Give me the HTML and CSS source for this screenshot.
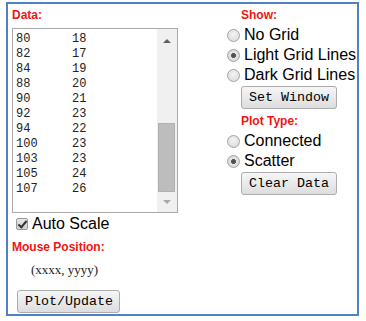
FILE: index.html
```html
<!DOCTYPE html>
<html lang="en">
<head>
  <meta charset="UTF-8" />
  <title>Plot Data</title>
  <link rel="stylesheet" href="styles.css">
</head>
<body>
  <div class="panel">
    <!-- Data entry column -->
    <div class="left-col">
      <div class="caption">Data:</div>
      <div class="data-box">
        <pre class="data-text">80	18
82	17
84	19
88	20
90	21
92	23
94	22
100	23
103	23
105	24
107	26</pre>
        <div class="scrollbar">
          <div class="arrow-up"></div>
          <div class="track"></div>
          <div class="thumb"></div>
          <div class="arrow-down"></div>
        </div>
      </div>
      <label class="check-row">
        <input type="checkbox" checked>
        <span>Auto Scale</span>
      </label>
      <div class="caption mouse-caption">Mouse Position:</div>
      <div class="mouse-pos">(xxxx, yyyy)</div>
      <button class="btn plot-btn">Plot/Update</button>
    </div>

    <!-- Options column -->
    <div class="right-col">
      <div class="caption indent">Show:</div>
      <label class="radio-row"><input type="radio" name="grid"><span>No Grid</span></label>
      <label class="radio-row"><input type="radio" name="grid" checked><span>Light Grid Lines</span></label>
      <label class="radio-row"><input type="radio" name="grid"><span>Dark Grid Lines</span></label>
      <button class="btn indent">Set Window</button>

      <div class="caption indent plot-type">Plot Type:</div>
      <label class="radio-row"><input type="radio" name="ptype"><span>Connected</span></label>
      <label class="radio-row"><input type="radio" name="ptype" checked><span>Scatter</span></label>
      <button class="btn indent">Clear Data</button>
    </div>
  </div>
</body>
</html>
```

FILE: styles.css
```css
body {
  margin: 0;
  padding: 0;
  background: #fff;
  font-family: 'Liberation Sans', Arial, sans-serif;
}

.panel {
  display: flex;
  width: 349px;
  height: 310px;
  margin: 2px 0 0 6px;
  border: 2px solid #4f81c4;
  box-sizing: content-box;
}

/* Left column */
.left-col {
  width: 166px;
  padding: 4px 0 0 4px;
  display: flex;
  flex-direction: column;
  align-items: flex-start;
}

.caption {
  color: #f01414;
  font-weight: 700;
  font-size: 12px;
  line-height: 14px;
}

.data-box {
  display: flex;
  width: 166px;
  height: 185px;
  margin-top: 6px;
  border: 1px solid #a9a9a9;
  box-sizing: border-box;
}

.data-text {
  flex: 1;
  margin: 0;
  padding: 3px 3px;
  font-family: 'Liberation Mono', 'Courier New', monospace;
  font-size: 12px;
  line-height: 15px;
  color: #222;
  tab-size: 56px;
  overflow: hidden;
}

.scrollbar {
  width: 20px;
  background: #f0f0f0;
  display: flex;
  flex-direction: column;
  align-items: center;
}

.arrow-up, .arrow-down {
  width: 0;
  height: 0;
  border-left: 4px solid transparent;
  border-right: 4px solid transparent;
}

.arrow-up {
  margin-top: 10px;
  margin-bottom: 10px;
  border-bottom: 4px solid #606060;
}

.track {
  flex: 1;
}

.thumb {
  width: 17px;
  height: 69px;
  margin-right: 1px;
  background: #bdbdbd;
  box-sizing: border-box;
  border: 1px solid #b0b0b0;
}

.arrow-down {
  margin-top: 8px;
  margin-bottom: 8px;
  border-top: 4px solid #a8a8a8;
}

.check-row {
  display: flex;
  align-items: center;
  height: 18px;
  margin-top: 2px;
  padding-left: 4px;
  font-size: 16px;
}

.check-row input {
  appearance: none;
  width: 12px;
  height: 12px;
  margin: 0 4px 0 0;
  border: 1px solid #9a9a9a;
  border-radius: 2px;
  background: linear-gradient(#e8e8e8, #d0d0d0);
  position: relative;
}

.check-row input:checked::after {
  content: "";
  position: absolute;
  left: 3px;
  top: 0px;
  width: 3px;
  height: 7px;
  border-right: 2px solid #333;
  border-bottom: 2px solid #333;
  transform: rotate(40deg);
}

.mouse-caption {
  margin-top: 7px;
}

.mouse-pos {
  margin: 8px 0 0 19px;
  font-family: 'Liberation Serif', 'Times New Roman', serif;
  font-size: 13px;
  line-height: 16px;
  color: #222;
}

.btn {
  height: 23px;
  padding: 0 7px;
  font-family: 'Liberation Mono', 'Courier New', monospace;
  font-size: 13.33px;
  color: #000;
  background: linear-gradient(#f6f6f6, #dddddd);
  border: 1px solid #acacac;
  border-radius: 3px;
}

.plot-btn {
  margin: 12px 0 0 5px;
  width: 103px;
}

/* Right column */
.right-col {
  margin-left: 49px;
  padding-top: 4px;
  display: flex;
  flex-direction: column;
  align-items: flex-start;
}

.indent {
  margin-left: 14px;
}

.right-col .caption {
  margin-bottom: 3px;
}

.right-col .plot-type {
  margin-top: 5px;
}

.right-col .btn {
  width: 96px;
  margin-top: 1px;
}

.radio-row {
  display: flex;
  align-items: center;
  height: 20px;
  font-size: 16px;
  color: #000;
}

.radio-row input {
  appearance: none;
  width: 13px;
  height: 13px;
  margin: 0 4px 0 0;
  border: 1px solid #a4a4a4;
  border-radius: 50%;
  background: radial-gradient(circle at 50% 40%, #f4f4f4, #d6d6d6);
  box-sizing: border-box;
}

.radio-row input:checked {
  background: radial-gradient(circle, #4a4a4a 0, #5a5a5a 2.2px, #e4e4e4 2.8px, #d0d0d0);
}
```
